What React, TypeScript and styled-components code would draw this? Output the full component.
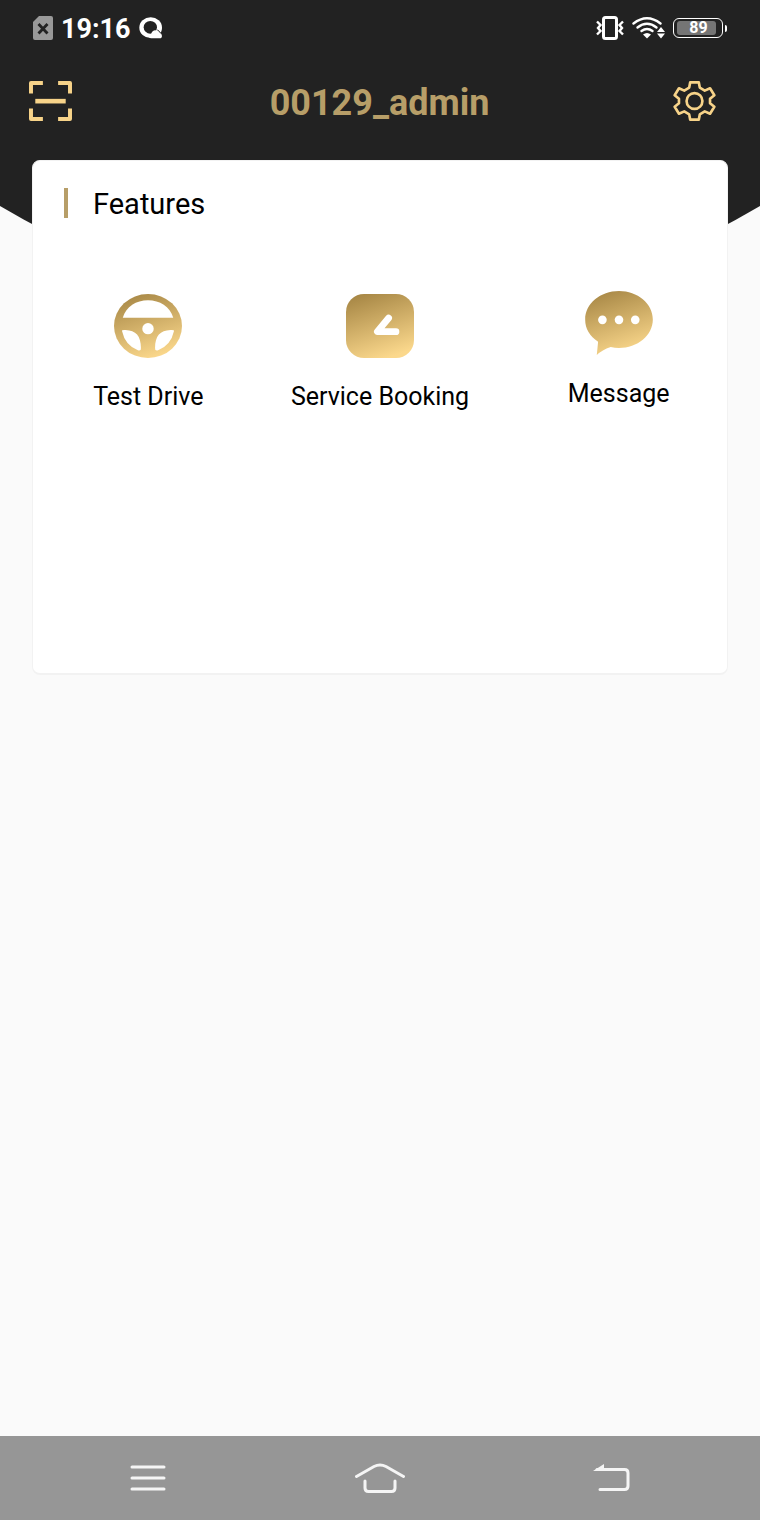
import React from "react";
import styled, { createGlobalStyle } from "styled-components";

const GlobalStyle = createGlobalStyle`
  * { box-sizing: border-box; }
  body {
    margin: 0;
    background: #fafafa;
    color: #000;
    font-family: Roboto, "Liberation Sans", sans-serif;
  }
`;

const Page = styled.div`
  position: relative;
  display: flex;
  flex-direction: column;
  min-height: 100vh;
`;

const Backdrop = styled.svg`
  position: absolute;
  top: 0;
  left: 0;
  width: 100%;
  height: 320px;
  z-index: -1;
`;

const StatusBar = styled.div`
  display: flex;
  justify-content: space-between;
  align-items: center;
  height: 56px;
  padding: 0 33px;
  color: #fff;
`;

const StatusGroup = styled.div`
  display: flex;
  align-items: center;
  gap: 8px;
  svg { display: block; }
`;

const Time = styled.time`
  padding-top: 2px;
  font-size: 27px;
  line-height: 32px;
  font-weight: 700;
`;

const Battery = styled.div`
  display: flex;
  align-items: center;
  gap: 2px;
`;

const BatteryCell = styled.div`
  display: flex;
  width: 50px;
  height: 20px;
  padding: 2px 6px 2px 3px;
  border: 1px solid #fff;
  border-radius: 6px;
`;

const BatteryLevel = styled.div`
  flex: 1;
  padding-left: 4px;
  border-radius: 3px;
  background: #757575;
  font-size: 16px;
  line-height: 14px;
  font-weight: 700;
  text-align: center;
`;

const BatteryTip = styled.div`
  width: 2px;
  height: 7px;
  background: #fff;
  border-radius: 0 2px 2px 0;
`;

const TitleBar = styled.header`
  display: grid;
  grid-template-columns: 1fr auto 1fr;
  align-items: center;
  height: 104px;
  padding: 0 44px 14px 29px;
`;

const Title = styled.h1`
  margin: 0;
  padding: 3px 0 0 14px;
  color: #b79e68;
  font-size: 36px;
  line-height: 44px;
  font-weight: 700;
`;

const IconButton = styled.button<{ $align?: "start" | "end" }>`
  display: flex;
  align-items: center;
  justify-content: center;
  justify-self: ${(p) => p.$align ?? "stretch"};
  padding: 0;
  border: 0;
  background: none;
  cursor: pointer;
`;

const Main = styled.main`
  flex: 1;
  padding: 0 32px;
`;

const Card = styled.section`
  min-height: 515px;
  padding-top: 24px;
  background: #fff;
  border: 1px solid #f2f2f2;
  border-bottom-width: 2px;
  border-radius: 8px;
`;

const CardHeading = styled.div`
  display: flex;
  align-items: center;
  gap: 25px;
  padding-left: 31px;
`;

const Accent = styled.span`
  width: 4px;
  height: 30px;
  background: #b79e68;
`;

const CardTitle = styled.h2`
  margin: 0;
  padding-top: 2px;
  font-size: 29px;
  line-height: 34px;
  font-weight: 400;
`;

const FeatureGrid = styled.div`
  display: grid;
  grid-template-columns: 203fr 261fr 217fr;
  padding: 70px 0 0 14px;
`;

const Feature = styled.button<{ $lowered?: boolean }>`
  display: flex;
  flex-direction: column;
  align-items: center;
  gap: 24px;
  padding: ${(p) => (p.$lowered ? "3px 0 0" : "0")};
  border: 0;
  background: none;
  color: #000;
  font-family: inherit;
  font-size: 25px;
  line-height: 30px;
  white-space: nowrap;
  cursor: pointer;
`;

const NavBar = styled.nav`
  display: grid;
  grid-template-columns: repeat(3, 1fr);
  height: 84px;
  padding: 0 32px;
  background: #969696;
`;

const Gold = ({ id }: { id: string }) => (
  <defs>
    <linearGradient id={id} x1="0.25" y1="0" x2="0.6" y2="1">
      <stop offset="0" stopColor="#a88846" />
      <stop offset="1" stopColor="#fbd88c" />
    </linearGradient>
  </defs>
);

const SimIcon = () => (
  <svg width="20" height="24" viewBox="0 0 20 24">
    <path d="M6 0H18Q20 0 20 2V22Q20 24 18 24H2Q0 24 0 22V6Z" fill="#999" />
    <path d="M5.500 8L14.500 17.500M14.500 8L5.500 17.500" stroke="#222" strokeWidth="2.800" />
  </svg>
);

const BrowserIcon = () => (
  <svg width="24" height="22" viewBox="0 0 72 66">
    <ellipse cx="35" cy="32" rx="34" ry="31" fill="#fff" />
    <ellipse cx="34" cy="31" rx="20" ry="19" fill="#222" />
    <path d="M36 64C27 64 27 50 37 50C39 38 54 36 58 46C70 46 73 64 62 64Z" fill="#fff" />
    <path d="M55 39Q62 42 65 49" stroke="#222" strokeWidth="3" fill="none" />
  </svg>
);

const VibrateIcon = () => (
  <svg width="28" height="24" viewBox="0 0 28 24" fill="none" stroke="#fff">
    <rect x="7.500" y="1.500" width="13" height="21" rx="2" strokeWidth="3" />
    <path d="M1 5.500L4.500 9L2 12L4.500 15L1 18.500M27 5.500L23.500 9L26 12L23.500 15L27 18.500" strokeWidth="2.400" />
  </svg>
);

const WifiIcon = () => (
  <svg width="33" height="22" viewBox="0 0 33 22" fill="none" stroke="#fff" strokeWidth="2.400" strokeLinecap="round">
    <path d="M1.500 6.500Q15 -4 28.500 6.500" />
    <path d="M5.500 10.500Q15 3 24.500 10.500" />
    <path d="M9.500 14Q15 10 20.500 14" />
    <path d="M11 17.500Q15 14.500 19 17.500L15 21.500Z" fill="#fff" stroke="none" />
    <path d="M29 10L33 15H25ZM25 16.500H33L29 21.500Z" fill="#fff" stroke="none" />
  </svg>
);

const ScanIcon = () => (
  <svg width="43" height="40" viewBox="0 0 130 121" fill="none" stroke="#f7d389" strokeWidth="12" strokeLinejoin="round">
    <path d="M42 6H6V38M88 6H124V38M6 83V115H42M124 83V115H88" />
    <path d="M19 61H111" strokeWidth="14" />
  </svg>
);

const GearIcon = () => (
  <svg width="43" height="40" viewBox="0 0 130 121" fill="none" stroke="#f7d389" strokeWidth="8" strokeLinejoin="round">
    <path d="M52 4H78L81 20L96 29L112 22L125 43L112 54V67L125 78L112 99L96 92L81 101L78 117H52L49 101L34 92L18 99L5 78L18 67V54L5 43L18 22L34 29L49 20Z" />
    <circle cx="65" cy="60.500" r="24" />
  </svg>
);

const WheelIcon = () => (
  <svg width="68" height="64" viewBox="0 0 202 192" preserveAspectRatio="none">
    <Gold id="gold-wheel" />
    <ellipse cx="101" cy="96" rx="101" ry="96" fill="url(#gold-wheel)" />
    <g fill="#fff">
      <path d="M26 71C36 38 66 19 101 19S166 38 176 71Z" />
      <path d="M24 112Q22 107 34 108C65 109 80 126 80 162Q81 172 71 169Q33 154 24 112Z" />
      <path d="M178 112Q180 107 168 108C137 109 122 126 122 162Q121 172 131 169Q169 154 178 112Z" />
      <circle cx="101" cy="104" r="17" />
    </g>
  </svg>
);

const BookingIcon = () => (
  <svg width="68" height="64" viewBox="0 0 204 192">
    <Gold id="gold-booking" />
    <rect width="204" height="192" rx="54" fill="url(#gold-booking)" />
    <path d="M128 72L94 113H150" fill="none" stroke="#fff" strokeWidth="20" strokeLinecap="round" strokeLinejoin="round" />
  </svg>
);

const MessageIcon = () => (
  <svg width="68" height="64" viewBox="0 0 204 193">
    <Gold id="gold-message" />
    <path
      d="M102 0C158 0 204 38 204 86S158 172 102 172Q89 172 77 169Q51 178 35 193L39 153C14 137 0 114 0 86C0 38 46 0 102 0Z"
      fill="url(#gold-message)"
    />
    <g fill="#fff">
      <circle cx="52" cy="87" r="13" />
      <circle cx="102" cy="87" r="13" />
      <circle cx="151" cy="87" r="13" />
    </g>
  </svg>
);

const MenuIcon = () => (
  <svg width="36" height="26" viewBox="0 0 36 26" stroke="#f5f5f5" strokeWidth="3" strokeLinecap="round">
    <path d="M2 2H34M2 13H34M2 24H34" />
  </svg>
);

const HomeIcon = () => (
  <svg width="50" height="30" viewBox="0 0 50 30" fill="none" stroke="#f5f5f5" strokeWidth="3" strokeLinecap="round">
    <path d="M1.500 13.500L19 3.500Q25 0.500 31 3.500L48.500 13.500" />
    <path d="M10 18V25Q10 28.500 13.500 28.500H36.500Q40 28.500 40 25V18" />
  </svg>
);

const BackIcon = () => (
  <svg width="38" height="28" viewBox="0 0 38 28" fill="none" stroke="#f5f5f5" strokeWidth="3" strokeLinecap="round">
    <path d="M4 5.500H31.500Q35 5.500 35 9V22Q35 25.500 31.500 25.500H7" />
    <path d="M0 7L11 0V7Z" fill="#f5f5f5" stroke="none" />
  </svg>
);

export default function App() {
  return (
    <>
      <GlobalStyle />
      <Page>
        <Backdrop viewBox="0 0 760 320" preserveAspectRatio="none" aria-hidden="true">
          <path d="M0 0H760V206Q380 430 0 206Z" fill="#222" />
        </Backdrop>
        <StatusBar>
          <StatusGroup>
            <SimIcon />
            <Time>19:16</Time>
            <BrowserIcon />
          </StatusGroup>
          <StatusGroup>
            <VibrateIcon />
            <WifiIcon />
            <Battery>
              <BatteryCell>
                <BatteryLevel>89</BatteryLevel>
              </BatteryCell>
              <BatteryTip />
            </Battery>
          </StatusGroup>
        </StatusBar>
        <TitleBar>
          <IconButton $align="start" aria-label="Scan">
            <ScanIcon />
          </IconButton>
          <Title>00129_admin</Title>
          <IconButton $align="end" aria-label="Settings">
            <GearIcon />
          </IconButton>
        </TitleBar>
        <Main>
          <Card>
            <CardHeading>
              <Accent />
              <CardTitle>Features</CardTitle>
            </CardHeading>
            <FeatureGrid>
              <Feature $lowered>
                <WheelIcon />
                Test Drive
              </Feature>
              <Feature $lowered>
                <BookingIcon />
                Service Booking
              </Feature>
              <Feature>
                <MessageIcon />
                Message
              </Feature>
            </FeatureGrid>
          </Card>
        </Main>
        <NavBar>
          <IconButton aria-label="Recent apps">
            <MenuIcon />
          </IconButton>
          <IconButton aria-label="Home">
            <HomeIcon />
          </IconButton>
          <IconButton aria-label="Back">
            <BackIcon />
          </IconButton>
        </NavBar>
      </Page>
    </>
  );
}
